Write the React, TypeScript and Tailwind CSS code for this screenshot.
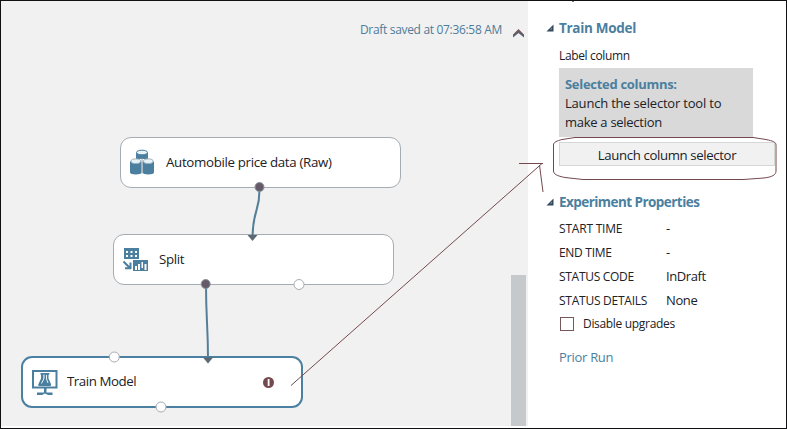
import type { ReactNode } from "react";

function DatasetIcon() {
  return (
    <svg width="26" height="27" viewBox="0 0 26 27" className="shrink-0">
      <g fill="#4b7f9f">
        <path d="M7 3.5v6.5h12V3.5z" />
        <path d="M1 12.500v11c0 1.300 2.500 2 5.800 2s5.800-.7 5.800-2v-11z" />
        <path d="M13.600 12.500v11c0 1.300 2.500 2 5.700 2s5.700-.7 5.700-2v-11z" />
      </g>
      <path d="M12.500 9.500h1.200v15h-1.200z" fill="#aab4ba" />
      <ellipse cx="13" cy="3.500" rx="5.500" ry="2.300" fill="#e6f3f8" stroke="#4b7f9f" />
      <g fill="#e6f3f8" stroke="#9fb0ba">
        <ellipse cx="6.800" cy="12.200" rx="4.800" ry="2.300" />
        <ellipse cx="19.300" cy="12.200" rx="4.800" ry="2.300" />
      </g>
    </svg>
  );
}

function SplitIcon() {
  return (
    <svg width="26" height="24" viewBox="0 0 26 24" className="shrink-0">
      <rect x="1" y="0" width="15" height="11" fill="#4b7f9f" />
      <g fill="#fff">
        <rect x="3" y="3" width="2" height="2" />
        <rect x="7.500" y="3" width="2" height="2" />
        <rect x="12" y="3" width="2" height="2" />
        <rect x="3" y="7" width="2" height="2" />
        <rect x="7.500" y="7" width="2" height="2" />
        <rect x="12" y="7" width="2" height="2" />
      </g>
      <path d="M0.500 13.500L6.500 19.500M7.500 14.500V21M8 20.300H2" fill="none" stroke="#4b7f9f" strokeWidth="2" />
      <rect x="10" y="12" width="15" height="11" fill="#4b7f9f" />
      <g fill="#fff">
        <rect x="12" y="18" width="2" height="4" />
        <rect x="15" y="16" width="2" height="6" />
        <rect x="18.500" y="14" width="1.500" height="6" />
        <rect x="21.500" y="16" width="2" height="6" />
      </g>
    </svg>
  );
}

function TrainIcon() {
  return (
    <svg width="26" height="25" viewBox="0 0 26 25" className="shrink-0">
      <g fill="#4b7f9f">
        <path fillRule="evenodd" d="M0 0h25.500v18.500H0zM2 2v14.500h21.500V2z" />
        <path d="M12 18h2.500v4.500h6V25H16l-3-1.500-3 1.500H5v-2.500h7z" />
        <path d="M8.500 3h4v1l-1 1v3.500L9 13v3H7l-1-1 3-6.500V5l-.5-.5z" />
        <path d="M12 3h5.500v1l-1 1v3.500l2.500 5.500v1.500l-1 .5H7.500L7 14.500l4.500-6V4.500z" />
      </g>
      <path d="M12 4.500v4l-2.500 5M14.500 5v4l1.500 4" fill="none" stroke="#e6f3f8" strokeWidth="1" />
    </svg>
  );
}

function Chevron({ className }: { className: string }) {
  return (
    <svg width="11" height="9" viewBox="0 0 11 9" className={className}>
      <path d="M0 8V5.500L5.500 0 11 5.500V8L5.500 3.500z" fill="#76575b" />
      <path d="M0 8.500V7L5.500 2.500 11 7v1.500L5.500 4z" fill="#51647a" />
    </svg>
  );
}

function Node({ className, icon, children }: { className: string; icon: ReactNode; children: ReactNode }) {
  return (
    <div className={`absolute flex items-center bg-white text-[13.3px] text-[#202126] ${className}`}>
      {icon}
      {children}
    </div>
  );
}

function Heading({ children }: { children: ReactNode }) {
  return (
    <div className="flex h-5 items-center">
      <svg width="8" height="8" viewBox="0 0 8 8" className="mr-[5px] ml-[16px] shrink-0">
        <path d="M0.500 7.500H7.500V0.500z" fill="#33495c" />
        <path d="M4 5.500H6V3.500z" fill="#6e9bb5" />
      </svg>
      {children}
    </div>
  );
}

function Property({ name, value }: { name: ReactNode; value: ReactNode }) {
  return (
    <div className="flex h-6 items-center pl-[29px]">
      <div className="w-[107px] text-[12px]">{name}</div>
      <div className="text-[13px]">{value}</div>
    </div>
  );
}

export default function App() {
  return (
    <div className="relative flex h-[429px] w-[787px] overflow-hidden border border-[#111113] bg-white font-['Open_Sans','Noto_Sans',sans-serif] whitespace-nowrap text-[#202126]">
      <main className="relative h-[425px] w-[510px] bg-[#f1f1f1]">
        <div className="flex h-[58px] items-center justify-end pr-[9px] text-[12px] text-[#4f7c99]">
          <span className="tracking-[-0.32px]">Draft saved at 07:36:58 AM</span>
        </div>
        <Node className="top-[136px] left-[119px] h-[51px] w-[281px] rounded-[11px] border border-[#a5adb3] pl-[8px]" icon={<DatasetIcon />}>
          <span className="ml-[11px] tracking-[-0.33px]">Automobile price data (Raw)</span>
        </Node>
        <Node className="top-[233px] left-[112px] h-[51px] w-[281px] rounded-[11px] border border-[#a5adb3] pl-[9px]" icon={<SplitIcon />}>
          <span className="ml-[10px] tracking-[-0.33px]">Split</span>
        </Node>
        <Node className="top-[355px] left-[20px] h-[52px] w-[282px] rounded-[11px] border-2 border-[#4b80a2] pl-[9px]" icon={<TrainIcon />}>
          <span className="ml-[9px] tracking-[-0.45px]">Train Model</span>
          <svg width="11" height="11" viewBox="0 0 11 11" className="mr-[27px] ml-auto">
            <circle cx="5.500" cy="5.500" r="5.500" fill="#74494d" />
            <rect x="4.700" y="2" width="1.800" height="7" fill="#fff" />
          </svg>
        </Node>
      </main>
      <div className="h-[425px] w-[17px] shrink-0 bg-[#f1f1f1]">
        <Chevron className="mt-[28px] ml-[2px]" />
        <div className="mt-[237px] h-[151px] w-[15px] bg-[#c5c9cc]" />
      </div>
      <aside className="flex flex-1 flex-col pl-[2px]">
        <div className="ml-[42px] h-px w-[2px] bg-[#777]" />
        <div className="mt-[16px]">
          <Heading>
            <span className="text-[13.5px] font-bold tracking-[-0.3px] text-[#4b7f9f]">Train Model</span>
          </Heading>
          <div className="mt-[8px] flex h-5 items-center pl-[29px] text-[12px]">
            <span className="tracking-[-0.35px]">Label column</span>
          </div>
          <div className="mt-[2px] ml-[29px] h-[69px] w-[194px] bg-[#d9d9d9] pt-[7px] pl-[6px] text-[13px] leading-[19px]">
            <div className="font-bold tracking-[-0.3px] text-[#4b7f9f]">Selected columns:</div>
            <div className="tracking-[-0.2px]">Launch the selector tool to</div>
            <div className="tracking-[-0.28px]">make a selection</div>
          </div>
          <div className="mt-[5px] ml-[29px] flex h-[24px] w-[216px] items-center justify-center border border-[#d6d6d6] bg-[#f1f1f1] pt-[3px] text-[13.2px]">
            <span className="tracking-[-0.36px]">Launch column selector</span>
          </div>
          <div className="mt-[26px]">
            <Heading>
              <span className="text-[13.5px] font-bold tracking-[-0.55px] text-[#4b7f9f]">Experiment Properties</span>
            </Heading>
          </div>
          <div className="mt-[5px]">
            <Property name={<span className="tracking-[-0.2px]">START TIME</span>} value="-" />
            <Property name={<span className="tracking-[-0.3px]">END TIME</span>} value="-" />
            <Property name={<span className="tracking-[-0.3px]">STATUS CODE</span>} value={<span className="tracking-[-0.4px]">InDraft</span>} />
            <Property name={<span className="tracking-[-0.25px]">STATUS DETAILS</span>} value={<span className="tracking-[-0.4px]">None</span>} />
          </div>
          <div className="flex h-[22px] items-center pl-[30px] text-[12px]">
            <span className="mr-[9px] size-[14px] border border-[#76575b] bg-white" />
            <span className="tracking-[-0.32px]">Disable upgrades</span>
          </div>
          <div className="mt-[13px] flex h-5 items-center pl-[29px] text-[13px] text-[#4b7f9f]">
            <span className="tracking-[-0.3px]">Prior Run</span>
          </div>
        </div>
      </aside>
      <svg width="787" height="429" viewBox="0 0 787 429" className="pointer-events-none absolute -top-px -left-px">
        <g fill="none" stroke="#557f99" strokeWidth="2">
          <path d="M259.500 188C260 212 253 208 252.500 237" />
          <path d="M206 285C206 320 208 325 208 359" />
        </g>
        <g fill="#5b6974">
          <path d="M247.500 235h10l-5 6z" />
          <path d="M203 357.500h10l-5 6z" />
        </g>
        <g fill="#665a68" stroke="#8796a0">
          <circle cx="259.500" cy="187" r="4.500" />
          <circle cx="205.700" cy="284" r="4.500" />
        </g>
        <g fill="#fff" stroke="#a5adb3">
          <circle cx="299" cy="284.500" r="5" />
          <circle cx="114.300" cy="357" r="5" />
          <circle cx="161" cy="407" r="5" />
        </g>
        <g fill="none" stroke="#74494d" strokeWidth="1">
          <path d="M291 385.500L542 163.500M519 163.500H543M539.500 165L543 192" />
          <path d="M575 137.500H753L766 139.500C773 141 776 142 776 145V171C776 175 772 177 764 178L743 179.500H583L565 177.500C557 176 553.500 174 553.500 171V145C553.500 142 557 141 562 139.500z" />
        </g>
      </svg>
    </div>
  );
}
